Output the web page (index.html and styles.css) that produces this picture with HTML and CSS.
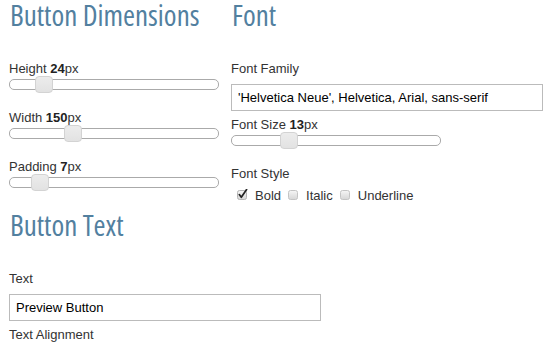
FILE: index.html
```html
<!DOCTYPE html>
<html>
<head>
<meta charset="utf-8">
<title>Button Builder</title>
<link rel="stylesheet" href="styles.css">
</head>
<body>
<div class="columns">
  <section class="col">
    <h2 class="title">Button Dimensions</h2>
    <div class="label first">Height <b>24</b>px</div>
    <div class="slider"><span class="handle" style="left:25px"></span></div>
    <div class="label next">Width <b>150</b>px</div>
    <div class="slider"><span class="handle" style="left:54px"></span></div>
    <div class="label next">Padding <b>7</b>px</div>
    <div class="slider"><span class="handle" style="left:21px"></span></div>
  </section>
  <section class="col">
    <h2 class="title">Font</h2>
    <div class="label first">Font Family</div>
    <input class="text-input" type="text" value="'Helvetica Neue', Helvetica, Arial, sans-serif">
    <div class="label after-input">Font Size <b>13</b>px</div>
    <div class="slider"><span class="handle" style="left:48px"></span></div>
    <div class="label next">Font Style</div>
    <div class="checks">
      <span class="check"><svg class="cb" width="12" height="11" viewBox="0 0 12 11"><defs><linearGradient id="g1" x1="0" y1="0" x2="0" y2="1"><stop offset="0" stop-color="#f6f6f6"/><stop offset="1" stop-color="#d6d6d6"/></linearGradient></defs><rect x="0.5" y="1.5" width="9" height="9" rx="2" fill="url(#g1)" stroke="#b4b4b4"/><path d="M2.3 5.6 L4.3 8.3 L9.6 0.6" fill="none" stroke="#222" stroke-width="1.7" stroke-linecap="round" stroke-linejoin="round"/></svg>Bold</span>
      <span class="check"><svg class="cb" width="12" height="11" viewBox="0 0 12 11"><rect x="0.5" y="1.5" width="9" height="9" rx="2" fill="url(#g1)" stroke="#c4c4c4"/></svg>Italic</span>
      <span class="check"><svg class="cb" width="12" height="11" viewBox="0 0 12 11"><rect x="0.5" y="1.5" width="9" height="9" rx="2" fill="url(#g1)" stroke="#c4c4c4"/></svg>Underline</span>
    </div>
  </section>
</div>
<section class="text-section">
  <h2 class="title">Button Text</h2>
  <div class="label first">Text</div>
  <input class="text-input" type="text" value="Preview Button">
  <div class="label after-input">Text Alignment</div>
</section>
</body>
</html>
```

FILE: styles.css
```css
html, body {
  margin: 0;
  background: #ffffff;
}

body {
  padding: 0 9px;
  font: 13px/15px "Liberation Sans", Arial, sans-serif;
  color: #333333;
  overflow: hidden;
}

.columns {
  display: grid;
  grid-template-columns: 222px 312px;
  align-items: start;
}

.title {
  margin: 0;
  font-family: "Open Sans", sans-serif;
  font-stretch: 78%;
  font-weight: 400;
  font-size: 29px;
  line-height: 30px;
  white-space: nowrap;
  color: #52809f;
  padding-left: 1px;
}

.label b {
  color: #222222;
}

.label.first {
  margin-top: 31px;
}

.label.next {
  margin-top: 20px;
}

.label.after-input {
  margin-top: 6px;
}

.slider {
  position: relative;
  margin-top: 3px;
  width: 210px;
  height: 11px;
  box-sizing: border-box;
  border: 1px solid #aaaaaa;
  border-radius: 5px;
  background: #ffffff;
}

.handle {
  position: absolute;
  top: -4px;
  width: 18px;
  height: 17px;
  box-sizing: border-box;
  border: 1px solid #d3d3d3;
  border-radius: 4px;
  background: linear-gradient(#ececec, #e2e2e2);
}

.text-input {
  display: block;
  margin: 8px 0 0;
  width: 312px;
  height: 27px;
  box-sizing: border-box;
  padding: 0 6px;
  border: 1px solid #bbbbbb;
  border-radius: 0;
  font: 13px/15px "Liberation Sans", Arial, sans-serif;
  color: #000000;
  background: #ffffff;
  outline: none;
}

.checks {
  margin-top: 7px;
  padding-left: 6px;
  display: flex;
  gap: 7px;
}

.check {
  display: inline-block;
}

.cb {
  vertical-align: baseline;
  margin-right: 6px;
}

.text-section {
  margin-top: 7px;
}
```
